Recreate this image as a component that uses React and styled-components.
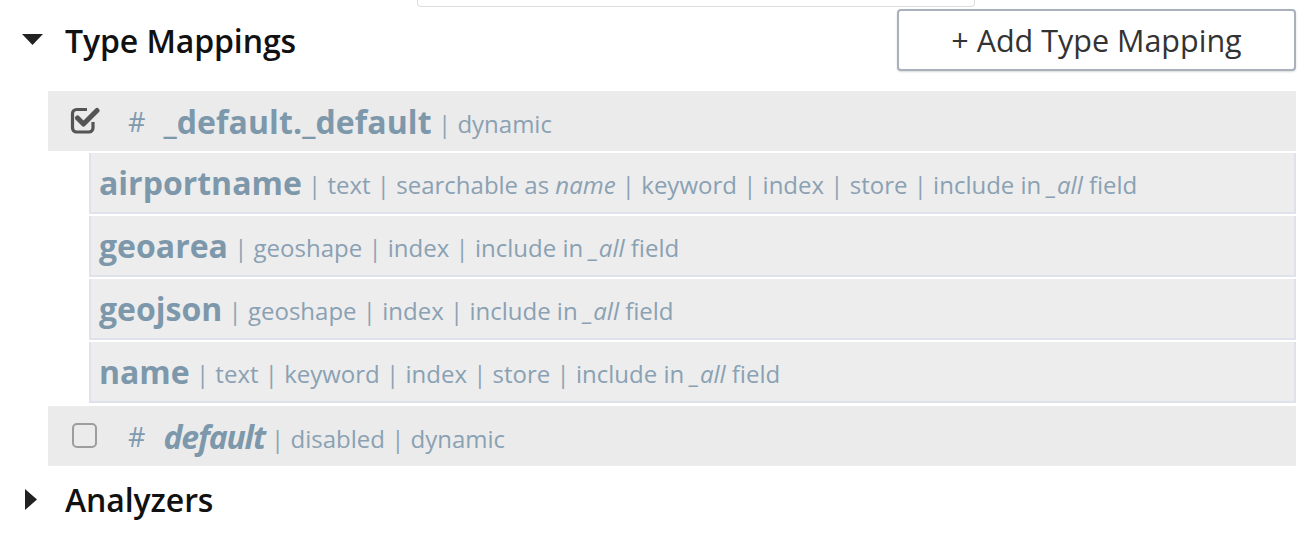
import React from "react";
import styled, { createGlobalStyle } from "styled-components";

const GlobalStyle = createGlobalStyle`
    body {
        margin: 0;
        background: #fff;
        font-family: 'Open Sans', 'Liberation Sans', sans-serif;
    }
`;

const fields = [
    { name: "airportname", meta: ["text", <>searchable as <i>name</i></>, "keyword", "index", "store", <>include in <i>_all</i> field</>] },
    { name: "geoarea", meta: ["geoshape", "index", <>include in <i>_all</i> field</>] },
    { name: "geojson", meta: ["geoshape", "index", <>include in <i>_all</i> field</>] },
    { name: "name", meta: ["text", "keyword", "index", "store", <>include in <i>_all</i> field</>] },
];

const Caret = ({ open }) => (
    open ? (
        <svg width="21" height="12" viewBox="0 0 21 12">
            <polygon points="0,0 21,0 10.5,11" fill="#222" />
        </svg>
    ) : (
        <svg width="13" height="21" viewBox="0 0 13 21">
            <polygon points="0,0 12,10.5 0,21" fill="#222" />
        </svg>
    )
);

const CheckedBox = () => (
    <svg width="30" height="28" viewBox="0 0 30 28">
        <path d="M17 3.5 H6.5 a4 4 0 0 0 -4 4 V22 a4 4 0 0 0 4 4 H19 a4 4 0 0 0 4 -4 V16"
            fill="none" stroke="#555" strokeWidth="3.2" />
        <polyline points="7.5,12 13.5,18 27,4.5" fill="none" stroke="#555" strokeWidth="5"
            strokeLinecap="round" strokeLinejoin="round" />
    </svg>
);

const Meta = ({ items }) => (
    <MetaText>
        {items.map((m, i) => (
            <React.Fragment key={i}> <Pipe>|</Pipe> {m}</React.Fragment>
        ))}
    </MetaText>
);

const App = () => {
    return (
        <Page>
            <GlobalStyle />
            <SearchStub />
            <SectionHeader>
                <Caret open />
                <SectionTitle>Type Mappings</SectionTitle>
                <AddButton>+ Add Type Mapping</AddButton>
            </SectionHeader>
            <MappingList>
                <TypeRow>
                    <CheckSlot><CheckedBox /></CheckSlot>
                    <Hash>#</Hash>
                    <TypeName>_default._default</TypeName>
                    <Meta items={["dynamic"]} />
                </TypeRow>
                <FieldList>
                    {fields.map((f) => (
                        <FieldRow key={f.name}>
                            <FieldName>{f.name}</FieldName>
                            <Meta items={f.meta} />
                        </FieldRow>
                    ))}
                </FieldList>
                <TypeRow $gap>
                    <CheckSlot><EmptyBox /></CheckSlot>
                    <Hash>#</Hash>
                    <TypeName $italic>default</TypeName>
                    <Meta items={["disabled", "dynamic"]} />
                </TypeRow>
            </MappingList>
            <SectionHeader $closed>
                <Caret />
                <SectionTitle>Analyzers</SectionTitle>
            </SectionHeader>
        </Page>
    );
};

const Page = styled.div`
    width: 1306px;
    height: 536px;
    overflow: hidden;
`;

const SearchStub = styled.div`
    margin-left: 417px;
    width: 556px;
    height: 6px;
    border: 1px solid #dcdcdc;
    border-top: none;
    border-radius: 0 0 4px 4px;
`;

const SectionHeader = styled.div`
    display: flex;
    align-items: center;
    height: 62px;
    margin-top: 2px;
    padding: 0 10px 0 ${({ $closed }) => ($closed ? "25px" : "22px")};
    gap: ${({ $closed }) => ($closed ? "27px" : "22px")};
`;

const SectionTitle = styled.h3`
    margin: 0;
    font-size: 32px;
    font-weight: 600;
    color: #111;
    flex: 1;
    letter-spacing: -0.1px;
`;

const AddButton = styled.button`
    font-family: 'Open Sans', 'Liberation Sans', sans-serif;
    font-size: 30.5px;
    color: #333;
    background: #fff;
    width: 399px;
    height: 62px;
    border: 2px solid #a9b1bd;
    border-radius: 4px;
    box-shadow: 0 1px 2px rgba(0, 0, 0, 0.15);
    padding: 0;
`;

const MappingList = styled.div`
    margin: 20px 10px 0 48px;
`;

const TypeRow = styled.div`
    display: flex;
    align-items: center;
    height: 60px;
    background: #ebebeb;
    padding-left: 22px;
    margin-top: ${({ $gap }) => ($gap ? "3px" : "0")};
`;

const CheckSlot = styled.span`
    display: flex;
    align-items: center;
    width: 30px;
    margin-top: -2px;
`;

const EmptyBox = styled.span`
    display: block;
    width: 21px;
    height: 21px;
    margin-left: 2px;
    border: 2px solid #9d9d9d;
    border-radius: 5px;
`;

const Hash = styled.span`
    font-size: 27px;
    color: #7f9aae;
    margin-left: 28px;
    margin-right: 18px;
`;

const TypeName = styled.span`
    font-size: 32px;
    font-weight: 700;
    font-style: ${({ $italic }) => ($italic ? "italic" : "normal")};
    color: #7d98ab;
    letter-spacing: ${({ $italic }) => ($italic ? "-1.2px" : "0.1px")};
`;

const FieldList = styled.div`
    margin-left: 41px;
`;

const FieldRow = styled.div`
    display: flex;
    align-items: center;
    height: 59px;
    margin-top: 2px;
    padding-left: 8px;
    background: #ededed;
    border: 2px solid #dfe2ea;
    border-top: none;
`;

const FieldName = styled.span`
    font-size: 32px;
    font-weight: 700;
    color: #7d98ab;
`;

const MetaText = styled.span`
    font-size: 24px;
    color: #8aa1b3;
    white-space: pre;
    margin-top: 4px;
`;

const Pipe = styled.span`
    color: #8fa3b3;
`;

export default App;
